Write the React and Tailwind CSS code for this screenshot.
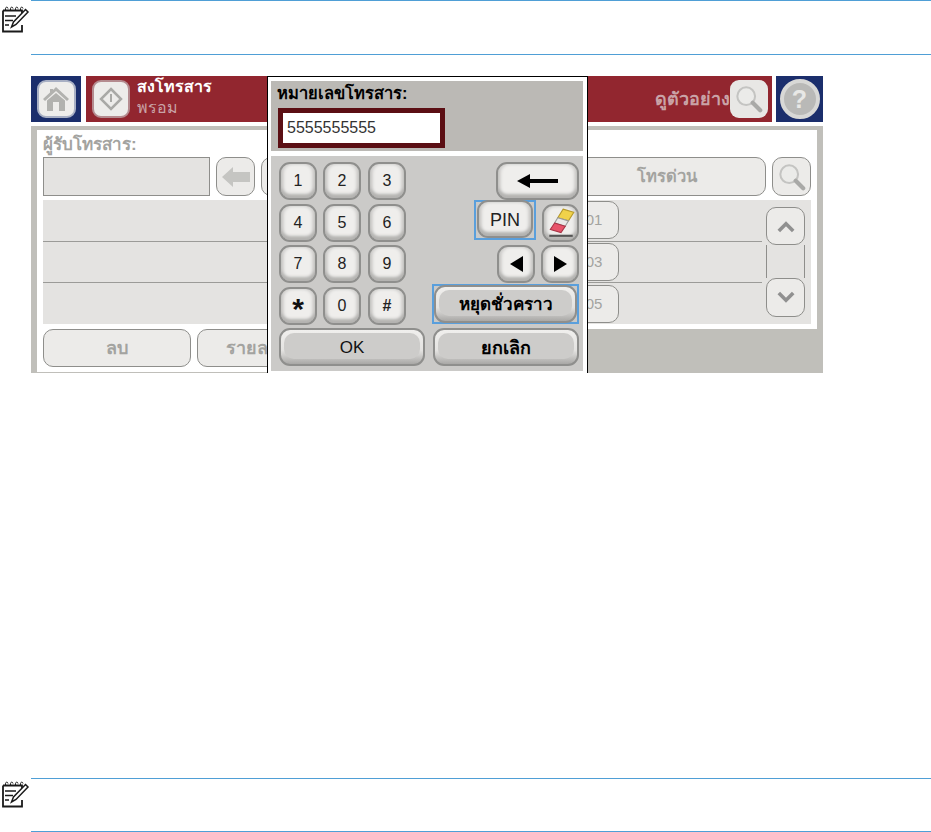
import React from 'react';

const thai = 'font-["Liberation_Sans","Noto_Sans","DejaVu_Sans",sans-serif]';

function NoteIcon() {
  return (
    <svg width="29" height="28" viewBox="0 0 29 28" fill="none" stroke="#1a1a1a">
      <path d="M2 5.500H21V12M21 20V26.500H2V5.500" strokeWidth="1.800" />
      <path d="M4.500 5C4 2 6.500 1 7 3.500M9.500 5C9 2 11.500 1 12 3.500M14.500 5C14 2 16.500 1 17 3.500M19.500 5C19 2 21.500 1 22 3.500" strokeWidth="1" />
      <path d="M4 11H15M4 15.500H12M4 20H8" strokeWidth="1.400" />
      <path d="M24.500 4.500L27 7L15 19.500L10.500 22L12.500 17Z" fill="#fff" strokeWidth="1.500" />
    </svg>
  );
}

function Note({ iconClass, boxClass }) {
  return (
    <div className="flex">
      <div className={`w-[31px] pl-px ${iconClass}`}>
        <NoteIcon />
      </div>
      <div className={`flex-1 border-t border-b border-[#4f9fd6] ${boxClass}`}></div>
    </div>
  );
}

function FadedButton({ className, children }) {
  return (
    <div className={`flex items-center justify-center rounded-[10px] border border-[#8e8e8b] bg-[#ecebe9] ${className}`}>
      {children}
    </div>
  );
}

function SearchIcon({ size }) {
  return (
    <svg width={size} height={size} viewBox="0 0 30 30" fill="none">
      <circle cx="12" cy="12" r="9.500" fill="#ebebe9" stroke="#c4c4c2" strokeWidth="2.200" />
      <path d="M19 19L27 27" stroke="#a9a9a7" strokeWidth="4.500" strokeLinecap="round" />
    </svg>
  );
}

// raised key on the dialog, light face
function Key({ className, children }) {
  return (
    <div className={`flex items-center justify-center h-[38px] rounded-[11px] border-2 border-[#8f8f8d] bg-[#efeeec] shadow-[inset_0_-4px_3px_#b4b3b1,inset_3px_0_3px_#d2d1cf,inset_-3px_0_3px_#d2d1cf] ${className}`}>
      {children}
    </div>
  );
}

// wide key, the face is a darker pill inside a bright bevel
function WideKey({ className, children }) {
  return (
    <div className={`h-[38px] p-[3px] pb-[5px] rounded-[11px] border-2 border-[#8f8f8d] bg-[linear-gradient(#f0efed,#e4e3e1_60%,#a9a8a6)] ${className}`}>
      <div className="flex items-center justify-center h-full pt-[4px] rounded-[10px] bg-[#cdccca]">{children}</div>
    </div>
  );
}

function NumKeys({ keys }) {
  return (
    <div className="flex">
      <Key className="w-[38px] text-[16px] text-[#222]">{keys[0]}</Key>
      <Key className="w-[38px] ml-[6px] text-[16px] text-[#222]">{keys[1]}</Key>
      <Key className="w-[38px] ml-[7px] text-[16px] text-[#222]">{keys[2]}</Key>
    </div>
  );
}

function ListRow({ label, line }) {
  return (
    <div className={`flex justify-end items-center h-[41.500px] mr-[49px] pr-[143px] ${line ? 'border-b border-[#9b9b98]' : ''}`}>
      <FadedButton className="w-[50px] h-[38px] text-[15px] text-[#a3a3a0]">{label}</FadedButton>
    </div>
  );
}

export default function App() {
  return (
    <div className={`h-[832px] bg-white overflow-hidden ${thai}`}>
      <Note iconClass="pt-[5px]" boxClass="h-[55px]" />

      <div className="relative ml-[31px] mt-[21px] w-[792px] h-[297px]">
        <div className="flex h-[46px] gap-[5px]">
          <div className="flex items-center justify-center w-[50px] bg-[#1b2e6c]">
            <div className="flex items-center justify-center w-[39px] h-[38px] rounded-[9px] border-2 border-[#a9b0c4] bg-[#eeedeb]">
              <svg width="28" height="26" viewBox="0 0 28 26" fill="#b2b2af">
                <path d="M14 1L27 13L25 15L14 5L3 15L1 13L8 6.500V3H11V4Z" />
                <path d="M5 14.500L14 7L23 14.500V25H17V16H11V25H5Z" />
              </svg>
            </div>
          </div>
          <div className="flex-1 flex items-center bg-[#92262f] pl-[6px]">
            <div className="flex items-center justify-center w-[38px] h-[38px] rounded-[9px] border-2 border-[#b58c90] bg-[#edecea]">
              <svg width="24" height="24" viewBox="0 0 24 24" fill="none" stroke="#a9a9a6">
                <path d="M12 2L22 12L12 22L2 12Z" strokeWidth="2.500" />
                <path d="M12 7V15" strokeWidth="2" />
              </svg>
            </div>
            <div className="ml-[7px] flex flex-col -mt-[3px]">
              <span className="text-[16px] leading-[18px] font-bold text-white">สงโทรสาร</span>
              <span className="text-[16px] leading-[18px] mt-[3px] text-[#c9a3a7]">พรอม</span>
            </div>
            <div className="ml-auto mr-[4px] flex items-center">
              <span className="text-[18px] leading-[20px] font-bold text-[#c9a3a7]">ดูตัวอย่าง</span>
              <div className="flex items-center justify-center w-[38px] h-[38px] rounded-[9px] bg-[#e8e7e5]">
                <SearchIcon size={28} />
              </div>
            </div>
          </div>
          <div className="flex items-center justify-center w-[47px] -ml-px bg-[#1b2e6c]">
            <div className="flex items-center justify-center w-[40px] h-[40px] rounded-full border-[4px] border-[#d8d8d6] bg-[#b9b9b7] text-[25px] leading-none font-bold text-[#e8e8e6]">?</div>
          </div>
        </div>

        <div className="mt-[4px] h-[247px] bg-[#c0bfba] px-[6px] pt-[4px]">
          <div className="h-[199px] bg-white px-[6px] pt-[4px]">
            <div className="h-[23px] text-[17px] leading-[22px] font-bold text-[#a3a3a0]">ผู้รับโทรสาร:</div>
            <div className="flex gap-[6px] h-[39px]">
              <div className="w-[167px] border border-[#8e8e8b] bg-[#e4e3e1]"></div>
              <FadedButton className="w-[39px]">
                <svg width="28" height="20" viewBox="0 0 28 20" fill="#c5c5c2">
                  <path d="M0 10L11 0V5H28V15H11V20Z" />
                </svg>
              </FadedButton>
              <FadedButton className="w-[300px]"></FadedButton>
              <FadedButton className="flex-1 text-[16.500px] font-bold text-[#a3a3a0]">โทรด่วน</FadedButton>
              <FadedButton className="w-[39px]">
                <SearchIcon size={28} />
              </FadedButton>
            </div>
            <div className="relative mt-[4px] h-[124px] bg-[#e4e3e1]">
              <ListRow label="01" line />
              <ListRow label="03" line />
              <ListRow label="05" />
              <div className="absolute top-[7px] right-[6px] flex flex-col w-[39px] h-[110px]">
                <FadedButton className="h-[38px]">
                  <svg width="18" height="13" viewBox="0 0 20 14" fill="none" stroke="#909090" strokeWidth="4">
                    <path d="M2 12L10 4L18 12" />
                  </svg>
                </FadedButton>
                <div className="flex-1 border-x border-[#8e8e8b]"></div>
                <FadedButton className="h-[39px]">
                  <svg width="18" height="13" viewBox="0 0 20 14" fill="none" stroke="#909090" strokeWidth="4">
                    <path d="M2 2L10 10L18 2" />
                  </svg>
                </FadedButton>
              </div>
            </div>
          </div>
          <div className="flex gap-[6px] w-[400px] h-[43px] bg-white px-[6px]">
            <FadedButton className="w-[148px] h-[38px] text-[18px] font-bold text-[#a3a3a0]">ลบ</FadedButton>
            <FadedButton className="w-[148px] h-[38px] text-[18px] font-bold text-[#a3a3a0] justify-start pl-[28px]">รายละเอียด</FadedButton>
          </div>
        </div>

        {/* dialog over the screen */}
        <div className="absolute left-[236px] top-0 w-[321px] h-[297px] border-x border-t border-black bg-white pl-[3px] pr-[4px] pt-[4px]">
          <div className="h-[70px] bg-[#bbb9b5] pl-[6px] pt-[1px]">
            <div className="h-[26px] text-[16.500px] leading-[22px] font-bold text-black">หมายเลขโทรสาร:</div>
            <div className="flex items-center w-[167px] h-[40px] ml-px border-[5px] border-[#5b0f14] bg-white pl-[4px] text-[16px] text-[#333]">5555555555</div>
          </div>
          <div className="mt-[5px] h-[215px] bg-[#cbcac8] pl-[8px] pr-[4px] pt-[6px] flex flex-col gap-[3.500px]">
            <div className="flex justify-between">
              <NumKeys keys={['1', '2', '3']} />
              <Key className="w-[83px]">
                <svg width="41" height="14" viewBox="0 0 41 14" fill="#000">
                  <path d="M0 7L13 0V5H41V9H13V14Z" />
                </svg>
              </Key>
            </div>
            <div className="flex justify-between">
              <NumKeys keys={['4', '5', '6']} />
              <div className="flex items-start gap-[6px]">
                <div className="flex items-end justify-center w-[62px] h-[40px] -mt-[4px] border-2 border-[#5a9fdc]">
                  <Key className="w-[56px] h-[35px] pt-[3px] text-[18px] text-[#222]">PIN</Key>
                </div>
                <Key className="w-[37px]">
                  <svg width="28" height="32" viewBox="0 0 26 30">
                    <path d="M15 2L25 5L20 13L10 10Z" fill="#f1d24a" stroke="#b79a2a" />
                    <path d="M10 10L20 13L17 18L7 15Z" fill="#e9e9e7" stroke="#999" />
                    <path d="M7 15L17 18L13 24L3 21Z" fill="#e8546a" stroke="#a83244" />
                    <path d="M2 27H24" stroke="#555" strokeWidth="2" />
                  </svg>
                </Key>
              </div>
            </div>
            <div className="flex justify-between">
              <NumKeys keys={['7', '8', '9']} />
              <div className="flex gap-[6px]">
                <Key className="w-[38px]">
                  <svg width="13" height="16" viewBox="0 0 13 16" fill="#000">
                    <path d="M13 0V16L0 8Z" />
                  </svg>
                </Key>
                <Key className="w-[38px]">
                  <svg width="13" height="16" viewBox="0 0 13 16" fill="#000">
                    <path d="M0 0V16L13 8Z" />
                  </svg>
                </Key>
              </div>
            </div>
            <div className="flex justify-between">
              <div className="flex">
                <Key className="w-[38px] text-[30px] leading-none font-bold text-[#111] pt-[7px]">*</Key>
                <Key className="w-[38px] ml-[6px] text-[16px] text-[#222]">0</Key>
                <Key className="w-[38px] ml-[7px] text-[16px] font-bold text-[#222]">#</Key>
              </div>
              <div className="flex items-center justify-center w-[147px] h-[40px] -mt-[2.500px] border-2 border-[#5a9fdc]">
                <WideKey className="w-[143px] h-[36px] text-[17px] font-bold text-black">หยุดชั่วคราว</WideKey>
              </div>
            </div>
            <div className="flex justify-between">
              <WideKey className="w-[146px] text-[17px] text-[#111]">OK</WideKey>
              <WideKey className="w-[146px] text-[18px] font-bold text-black">ยกเลิก</WideKey>
            </div>
          </div>
        </div>
      </div>

      <div className="h-[405px]"></div>
      <Note iconClass="pt-[2px]" boxClass="h-[54px]" />
    </div>
  );
}
